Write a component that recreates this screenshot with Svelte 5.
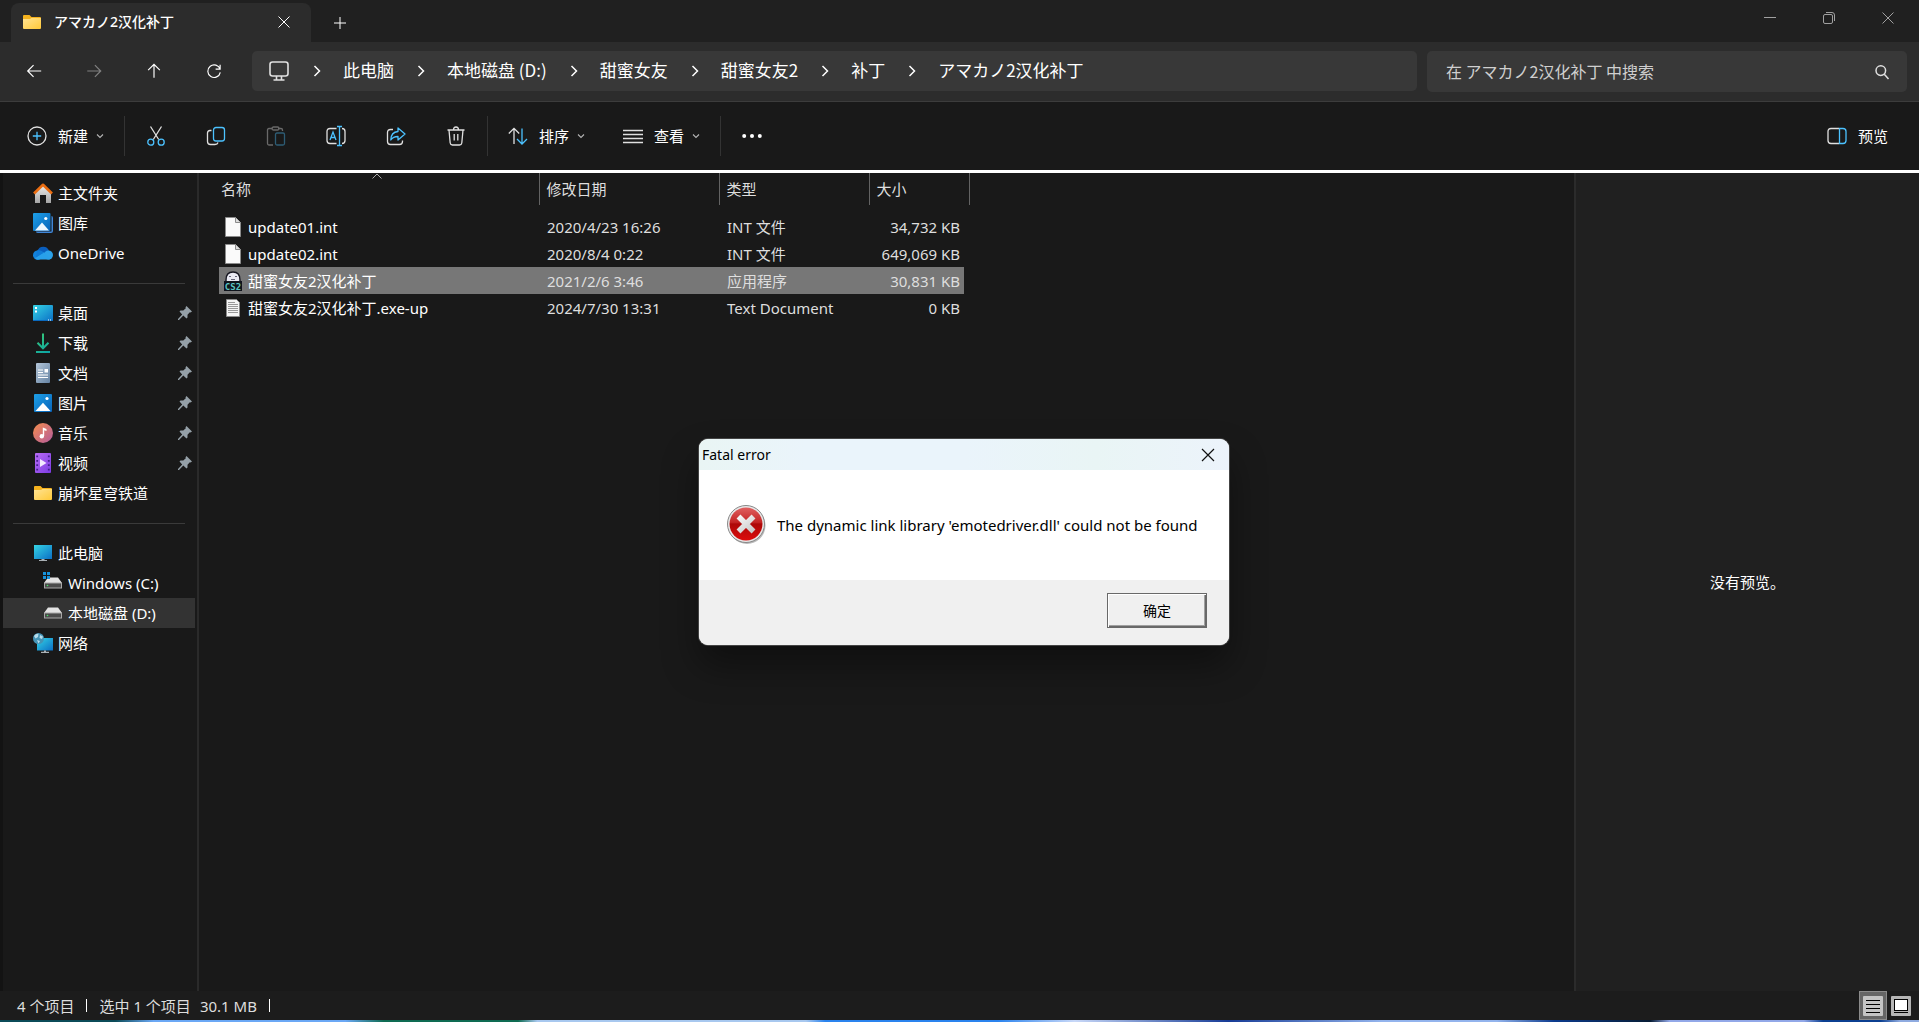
<script lang="ts">
	type Place = {
		icon: string;
		label: string;
		pinned?: boolean;
		nested?: boolean;
		current?: boolean;
	};

	type FileRow = {
		icon: string;
		name: string;
		date: string;
		type: string;
		size: string;
	};

	const folderName = 'アマカノ2汉化补丁';
	const crumbs = ['此电脑', '本地磁盘 (D:)', '甜蜜女友', '甜蜜女友2', '补丁', folderName];

	const groups: Place[][] = [
		[
			{ icon: 'home', label: '主文件夹' },
			{ icon: 'gallery', label: '图库' },
			{ icon: 'cloud', label: 'OneDrive' }
		],
		[
			{ icon: 'desktop', label: '桌面', pinned: true },
			{ icon: 'download', label: '下载', pinned: true },
			{ icon: 'document', label: '文档', pinned: true },
			{ icon: 'picture', label: '图片', pinned: true },
			{ icon: 'music', label: '音乐', pinned: true },
			{ icon: 'video', label: '视频', pinned: true },
			{ icon: 'folder', label: '崩坏星穹铁道' }
		],
		[
			{ icon: 'pc', label: '此电脑' },
			{ icon: 'drive-win', label: 'Windows (C:)', nested: true },
			{ icon: 'drive', label: '本地磁盘 (D:)', nested: true, current: true },
			{ icon: 'network', label: '网络' }
		]
	];

	const files: FileRow[] = [
		{ icon: 'blank', name: 'update01.int', date: '2020/4/23 16:26', type: 'INT 文件', size: '34,732 KB' },
		{ icon: 'blank', name: 'update02.int', date: '2020/8/4 0:22', type: 'INT 文件', size: '649,069 KB' },
		{ icon: 'exe', name: '甜蜜女友2汉化补丁', date: '2021/2/6 3:46', type: '应用程序', size: '30,831 KB' },
		{ icon: 'text', name: '甜蜜女友2汉化补丁.exe-up', date: '2024/7/30 13:31', type: 'Text Document', size: '0 KB' }
	];

	const tools = [
		{ icon: 'cut', label: '剪切' },
		{ icon: 'copy', label: '复制' },
		{ icon: 'paste', label: '粘贴', disabled: true },
		{ icon: 'rename', label: '重命名' },
		{ icon: 'share', label: '共享' },
		{ icon: 'trash', label: '删除' }
	];

	const navigation = [
		{ icon: 'back', label: '后退' },
		{ icon: 'forward', label: '前进', disabled: true },
		{ icon: 'up', label: '向上' },
		{ icon: 'refresh', label: '刷新' }
	];

	let selected = $state(2);
	let dialogOpen = $state(true);
	let query = $state('');

	const closeDialog = () => {
		dialogOpen = false;
	};
</script>

{#snippet chevron()}
	<svg class="chevron" viewBox="0 0 8 8" width="8" height="8" aria-hidden="true">
		<path d="M1 2.5 4 5.5 7 2.5" fill="none" stroke="#b5b5b5" stroke-width="1.1" />
	</svg>
{/snippet}

{#snippet glyph(name: string)}
	<svg class="glyph" viewBox="0 0 20 20" width="20" height="20" aria-hidden="true">
		{#if name === 'back'}
			<path d="M18 10H3M9.5 3.5 3 10 9.5 16.5" />
		{:else if name === 'forward'}
			<path d="M2.5 10H17.5M11 3.5 17.5 10 11 16.5" />
		{:else if name === 'up'}
			<path d="M10 17.5V3M3.5 9 10 2.5 16.5 9" />
		{:else if name === 'refresh'}
			<path d="M16.8 8A7 7 0 1 0 17 11.5M16.8 3V8H11.8" />
		{:else if name === 'monitor'}
			<rect x="1" y="1" width="18" height="14" rx="2.5" stroke-width="1.6" />
			<path d="M7.5 15V18.5M12.5 15V18.5M4.5 19H15.5" stroke-width="1.6" />
		{:else if name === 'new'}
			<circle cx="10" cy="10" r="9" />
			<path class="accent" d="M10 5.8V14.2M5.8 10H14.2" />
		{:else if name === 'cut'}
			<path d="M4.5 .5 12.7 13.5M15.5 .5 7.3 13.5" />
			<g class="accent"><circle cx="4.8" cy="16.2" r="3" /><circle cx="15.2" cy="16.2" r="3" /></g>
		{:else if name === 'copy'}
			<path d="M5.5 4.5H4Q1.5 4.5 1.5 7V15.5Q1.5 18.5 4.5 18.5H9Q11.5 18.5 12 16.5" />
			<rect class="accent" x="7.5" y="1.5" width="11" height="13.5" rx="2.5" />
		{:else if name === 'paste'}
			<path d="M6.5 2.5H3Q1.5 2.5 1.5 4V17.5Q1.5 19 3 19H7M12 2.5H15Q16.5 2.5 16.5 4V5" />
			<rect x="6" y="1" width="7" height="3" rx="1.5" />
			<rect class="accent" x="9.5" y="7" width="9" height="12" rx="1.5" />
		{:else if name === 'rename'}
			<path d="M10.5 2.5H4Q1 2.5 1 5.5V14.5Q1 17.5 4 17.5H10.5M16 2.5Q19 2.5 19 5.5V14.5Q19 17.5 16 17.5" />
			<path class="accent" d="M4 14 7 6 10 14M5 11.5H9M13.5 .5V19.5M11 .5H16M11 19.5H16" />
		{:else if name === 'share'}
			<path d="M7 3.5H4.5Q1.5 3.5 1.5 6.5V15.5Q1.5 18.5 4.5 18.5H13.5Q16.5 18.5 16.5 15.5V14.5" />
			<path class="accent" d="M12 2 19 8 12 14V10.5Q7 10.5 4.8 14Q5 6 12 5.5Z" stroke-linejoin="round" />
		{:else if name === 'trash'}
			<path d="M1.5 4H18.5M3 4 4.2 17Q4.5 19 6.5 19H13.5Q15.5 19 15.8 17L17 4M7.5 4Q7.5 1 10 1T12.5 4M8.2 8V14.5M11.8 8V14.5" />
		{:else if name === 'sort'}
			<path d="M6 18V2.5M.8 7.5 6 2.3 11.2 7.5" />
			<path class="accent" d="M14 2.5V17.5M9 13 14 18 19 13" />
		{:else if name === 'view'}
			<path d="M0 4.5H20M0 8.5H20M0 12.5H20M0 16.5H20" />
		{:else if name === 'more'}
			<g fill="#fff" stroke="none"><circle cx="2.2" cy="10" r="2" /><circle cx="10" cy="10" r="2" /><circle cx="17.8" cy="10" r="2" /></g>
		{:else if name === 'preview'}
			<path d="M12 2.5H4Q1 2.5 1 5.5V14.5Q1 17.5 4 17.5H12" />
			<path class="accent" d="M12.5 2.5H16Q19 2.5 19 5.5V14.5Q19 17.5 16 17.5H12.5Z" />
		{:else if name === 'search'}
			<circle cx="8.8" cy="8.6" r="4.8" stroke-width="1.5" />
			<path d="M12.3 12.3 16.5 17" stroke-width="1.5" />
		{/if}
	</svg>
{/snippet}

{#snippet picture(name: string)}
	<svg class="picture" viewBox="0 0 20 20" width="20" height="20" aria-hidden="true">
		{#if name === 'home'}
			<path d="M2 9 10 2 18 9V20H13V12H7V20H2Z" fill="url(#grey)" />
			<path d="M1 10.5 10 1.8 19 10.5" fill="none" stroke="#ea6d12" stroke-width="2.6" stroke-linejoin="round" />
		{:else if name === 'gallery'}
			<path d="M18.5 3Q20 3 20 5V18Q20 20 18 20H5Q3 20 3 18.5H18.5Z" fill="#3f86d8" />
			<rect width="17.5" height="18" rx="1" fill="url(#blue)" />
			<path d="M2 17.5 9 9.5 16 17.5Z" fill="#eef7ff" />
			<circle cx="12.8" cy="5.5" r="1.6" fill="#fff" />
		{:else if name === 'cloud'}
			<path d="M4.5 8A6 6 0 0 1 16 8L12 13Z" fill="#0a5ebd" />
			<circle cx="4.8" cy="12.2" r="4.8" fill="#1282dc" />
			<circle cx="15.5" cy="12" r="4.5" fill="#2ba1e9" />
			<path d="M2 15 11 9 17 16.5H4.5Q2.5 16.5 2 15Z" fill="#28a0ea" />
			<path d="M4 7.5Q7 6.5 11 9.5L3 14.5Z" fill="#0f7ad6" />
		{:else if name === 'desktop'}
			<rect y="2" width="20" height="16" rx="1" fill="url(#cyan)" />
			<path d="M0 17H20V18H0Z" fill="#0a69bd" />
			<path d="M2 4H4V6H2ZM2 7.5H4V9.5H2ZM15 16.5H16V17.5H15ZM17 16.5H18V17.5H17Z" fill="#fff" />
		{:else if name === 'download'}
			<path d="M10 .5V15M4.5 9.8 10 15.3 15.5 9.8M3 19H17" fill="none" stroke="url(#green)" stroke-width="2" />
		{:else if name === 'document'}
			<rect x="3" width="14" height="20" rx="1" fill="url(#steel)" />
			<path d="M5 7H10M5 9.5H10M5 12H15M5 14.5H15" stroke="#fff" stroke-width="1.2" />
			<path d="M11.5 6H15V9.5H11.5Z" fill="#fff" />
		{:else if name === 'picture'}
			<rect x="1" y="1" width="18" height="18" rx="1" fill="url(#blue)" />
			<path d="M2.5 18 10 9.8 17.5 18Z" fill="#fff" />
			<circle cx="14" cy="5.5" r="1.6" fill="#fff" />
		{:else if name === 'music'}
			<circle cx="10" cy="10" r="10" fill="url(#coral)" />
			<circle cx="8.8" cy="13.2" r="2.2" fill="#fff" />
			<path d="M9.8 13V4.5L13.5 6V8L11.2 7.2V13Z" fill="#fff" />
		{:else if name === 'video'}
			<rect x="2" width="16" height="20" rx="1" fill="url(#violet)" />
			<path d="M4.2 2.5V19M15.8 2.5V19" stroke="#43208d" stroke-width="1.8" stroke-dasharray="1.8 2.6" />
			<path d="M7 6 13.5 10 7 14Z" fill="#f3eaff" />
		{:else if name === 'folder'}
			<path d="M1 4Q1 3 2 3H7.5L9.5 5H18Q19 5 19 6V16H1Z" fill="#f5b21e" />
			<path d="M1 7H8L9.5 6H19V16Q19 17 18 17H2Q1 17 1 16Z" fill="url(#gold)" />
		{:else if name === 'pc'}
			<rect x="1" y="2" width="18" height="14" fill="url(#cyan)" />
			<path d="M8.5 16H11.5V17H14V18H6V17H8.5Z" fill="#a9b0b5" />
		{:else if name === 'drive' || name === 'drive-win'}
			<path d="M5 4.5H15L19 10H1Z" fill="#e4e4e4" />
			<rect x="1" y="9.5" width="18" height="6" fill="#a8a8a8" />
			<rect x="2" y="10.5" width="16" height="4" fill="#4b4b4b" />
			<circle cx="4.5" cy="12.5" r=".8" fill="#45e86a" />
			{#if name === 'drive-win'}
				<path d="M0 -1H7V6H0Z" fill="#191919" />
				<path d="M0 -1H3V2H0ZM4 -1H7V2H4ZM0 3H3V6H0ZM4 3H7V6H4Z" fill="#1793dc" />
			{/if}
		{:else if name === 'network'}
			<rect x="4" y="5" width="16" height="12.5" fill="url(#cyan)" />
			<path d="M11 17.5H13V18.8H16V20H8V18.8H11Z" fill="#a9b0b5" />
			<circle cx="5.5" cy="5.5" r="5.5" fill="#4593b5" />
			<path d="M1 3Q3 0 5.5 .8L5 4 2.5 5.5ZM7 2 10 3.5 9 6 6.5 5ZM4 7 7 8 5.5 10.5Z" fill="#b6dceb" />
		{:else if name === 'blank'}
			<path d="M2.5 .5H12.5L17.5 5.5V19.5H2.5Z" fill="#fafafa" stroke="#8b8b8b" />
			<path d="M12.5 .5V5.5H17.5" fill="#ddd" stroke="#8b8b8b" />
		{:else if name === 'text'}
			<path d="M3.5 1.5H13.5L16.5 4.5V18.5H3.5Z" fill="#f5f5f5" stroke="#8b8b8b" />
			<path d="M5 4.5H12M5 6.5H15M5 8.5H15M5 10.5H15M5 12.5H15M5 14.5H15" stroke="#999" />
		{:else if name === 'exe'}
			<path d="M3 9Q3 1 10 1T17 9V11H3Z" fill="#e9e9f2" stroke="#15151f" stroke-width="1.4" />
			<path d="M6 5.5H8M12 5.5H14M8 8.5H12" stroke="#666679" stroke-width="1.2" />
			<rect x="1" y="10" width="18" height="10" fill="#10141c" />
			<text x="10" y="18.5" text-anchor="middle">CS2</text>
		{/if}
	</svg>
{/snippet}

<svg class="defs" width="0" height="0" aria-hidden="true">
	<defs>
		<linearGradient id="grey" x2="0" y2="1"><stop stop-color="#eee" /><stop offset="1" stop-color="#a5a5a5" /></linearGradient>
		<linearGradient id="blue" x2="1" y2="1"><stop stop-color="#1da0e8" /><stop offset="1" stop-color="#0863b9" /></linearGradient>
		<linearGradient id="cyan" x2="1" y2="1"><stop stop-color="#35d4e4" /><stop offset="1" stop-color="#0b6fc6" /></linearGradient>
		<linearGradient id="green" gradientUnits="userSpaceOnUse" x1="4" y1="2" x2="16" y2="19"><stop stop-color="#37c978" /><stop offset="1" stop-color="#0da5a5" /></linearGradient>
		<linearGradient id="steel" x2="1" y2="1"><stop stop-color="#b4c6d8" /><stop offset="1" stop-color="#6583a3" /></linearGradient>
		<linearGradient id="coral" x2="1" y2="1"><stop stop-color="#f58d4c" /><stop offset="1" stop-color="#b35b9e" /></linearGradient>
		<linearGradient id="violet" x2="1" y2="1"><stop stop-color="#b96cf5" /><stop offset="1" stop-color="#7b3be2" /></linearGradient>
		<linearGradient id="gold" x2="1" y2="1"><stop stop-color="#ffe394" /><stop offset="1" stop-color="#ffc938" /></linearGradient>
		<linearGradient id="red" x2="0" y2="1"><stop stop-color="#e06060" /><stop offset=".45" stop-color="#c42424" /><stop offset=".5" stop-color="#ad0808" /><stop offset="1" stop-color="#dd0c0c" /></linearGradient>
		<linearGradient id="silver" gradientUnits="userSpaceOnUse" x1="12" y1="10" x2="26" y2="30"><stop stop-color="#fafafa" /><stop offset="1" stop-color="#c4c4c4" /></linearGradient>
	</defs>
</svg>

<div class="explorer">
	<header class="titlebar">
		<div class="tab">
			{@render picture('folder')}
			<span class="tab-title">{folderName}</span>
			<button type="button" class="tab-close" aria-label="关闭标签页">
				<svg viewBox="0 0 12 12" width="12" height="12"><path d="M.5 .5 11.5 11.5M11.5 .5 .5 11.5" /></svg>
			</button>
		</div>
		<button type="button" class="tab-add" aria-label="新建标签页">
			<svg viewBox="0 0 12 12" width="12" height="12"><path d="M6 0V12M0 6H12" /></svg>
		</button>
		<div class="window-controls">
			<button type="button" aria-label="最小化">
				<svg viewBox="0 0 12 12" width="12" height="12"><path d="M0 5.5H12" /></svg>
			</button>
			<button type="button" aria-label="还原">
				<svg viewBox="0 0 12 12" width="12" height="12">
					<rect x=".5" y="2.5" width="9" height="9" rx="1.5" />
					<path d="M3 .5H9Q11.5 .5 11.5 3V9" />
				</svg>
			</button>
			<button type="button" aria-label="关闭">
				<svg viewBox="0 0 12 12" width="12" height="12"><path d="M.5 .5 11.5 11.5M11.5 .5 .5 11.5" /></svg>
			</button>
		</div>
	</header>

	<div class="navbar">
		<div class="nav-buttons">
			{#each navigation as item (item.icon)}
				<button type="button" aria-label={item.label} disabled={item.disabled}>{@render glyph(item.icon)}</button>
			{/each}
		</div>
		<nav class="address" aria-label="地址栏">
			{@render glyph('monitor')}
			{#each crumbs as crumb}
				<svg class="crumb-arrow" viewBox="0 0 8 12" width="8" height="12" aria-hidden="true">
					<path d="M1.5 1 6.5 6 1.5 11" />
				</svg>
				<a href="#top">{crumb}</a>
			{/each}
		</nav>
		<label class="search">
			<input type="text" aria-label="搜索" placeholder="在 {folderName} 中搜索" bind:value={query} />
			{@render glyph('search')}
		</label>
	</div>

	<div class="toolbar">
		<button type="button" class="labelled">{@render glyph('new')}<span>新建</span>{@render chevron()}</button>
		<span class="rule"></span>
		{#each tools as tool (tool.icon)}
			<button type="button" class="tool" aria-label={tool.label} disabled={tool.disabled}>{@render glyph(tool.icon)}</button>
		{/each}
		<span class="rule"></span>
		<button type="button" class="labelled">{@render glyph('sort')}<span>排序</span>{@render chevron()}</button>
		<button type="button" class="labelled">{@render glyph('view')}<span>查看</span>{@render chevron()}</button>
		<span class="rule"></span>
		<button type="button" class="tool" aria-label="查看更多">{@render glyph('more')}</button>
		<button type="button" class="labelled preview-toggle">{@render glyph('preview')}<span>预览</span></button>
	</div>

	<div class="body">
		<aside class="sidebar">
			{#each groups as group}
				<ul>
					{#each group as place (place.label)}
						<li>
							<a href="#top" class:nested={place.nested} class:current={place.current}>
								{@render picture(place.icon)}
								<span>{place.label}</span>
								{#if place.pinned}
									<svg class="pin" viewBox="0 0 14 14" width="14" height="14" aria-hidden="true">
										<path d="M8.5 0 14 5.5 12.5 6.5 11.8 6.2 9.5 8.8 9.5 11.5 8.5 12.5 5.3 9.6 1 14 0 13.9 0 13 4.2 8.5 1.5 5.5 2.5 4.5 5.3 4.5 7.8 2.2 7.5 1.2Z" fill="#95a0a8" />
									</svg>
								{/if}
							</a>
						</li>
					{/each}
				</ul>
			{/each}
		</aside>

		<main class="files">
			<table>
				<colgroup>
					<col class="col-name" /><col class="col-date" /><col class="col-type" /><col class="col-size" /><col class="col-end" />
				</colgroup>
				<thead>
					<tr>
						<th class="sorted" aria-sort="ascending">
							名称
							<svg class="caret" viewBox="0 0 10 6" width="10" height="6" aria-hidden="true"><path d="M.5 5.5 5 1 9.5 5.5" /></svg>
						</th>
						<th>修改日期</th>
						<th>类型</th>
						<th colspan="2">大小</th>
					</tr>
				</thead>
				<tbody>
					{#each files as file, index (file.name)}
						<tr class:selected={selected === index} onclick={() => (selected = index)}>
							<td><span class="file-name">{@render picture(file.icon)}{file.name}</span></td>
							<td>{file.date}</td>
							<td>{file.type}</td>
							<td class="size">{file.size}</td>
						</tr>
					{/each}
				</tbody>
			</table>
		</main>

		<aside class="preview"><p>没有预览。</p></aside>
	</div>

	<footer class="status">
		<span>4 个项目</span>
		<span class="bar"></span>
		<span class="selection">选中 1 个项目</span>
		<span>30.1 MB</span>
		<span class="bar"></span>
		<div class="modes">
			<button type="button" class="active" aria-label="详细信息">
				<svg viewBox="0 0 20 20" width="20" height="20">
					<rect width="20" height="20" rx="1" fill="#c4c4c4" />
					<path d="M3 4.5H17M3 8.5H17M3 12.5H17M3 16.5H17" stroke="#000" />
				</svg>
			</button>
			<button type="button" aria-label="大缩略图">
				<svg viewBox="0 0 20 20" width="20" height="20">
					<rect width="20" height="20" rx="1" fill="#b5b5b5" />
					<rect x="3.5" y="3.5" width="13" height="11" fill="#fff" stroke="#000" />
					<path d="M3 16.5H17" stroke="#000" />
				</svg>
			</button>
		</div>
	</footer>
	<div class="wallpaper"></div>

	{#if dialogOpen}
		<div class="dialog" role="alertdialog" aria-labelledby="dialog-title" aria-describedby="dialog-message">
			<div class="dialog-title">
				<span id="dialog-title">Fatal error</span>
				<button type="button" aria-label="关闭对话框" onclick={closeDialog}>
					<svg viewBox="0 0 12 12" width="12" height="12"><path d="M0 0 12 12M12 0 0 12" /></svg>
				</button>
			</div>
			<div class="dialog-message">
				<svg viewBox="0 0 40 40" width="40" height="40" aria-hidden="true">
					<circle cx="21" cy="20.5" r="18.5" fill="#b9b9b9" />
					<circle cx="20" cy="19" r="18.5" fill="#e8e8e8" stroke="#888" />
					<circle cx="20" cy="19" r="16.5" fill="url(#red)" />
					<path d="M12.5 11.5 27.5 26.5M27.5 11.5 12.5 26.5" stroke="url(#silver)" stroke-width="5.5" />
				</svg>
				<p id="dialog-message">The dynamic link library 'emotedriver.dll' could not be found</p>
			</div>
			<div class="dialog-actions">
				<button type="button" onclick={closeDialog}>确定</button>
			</div>
		</div>
	{/if}
</div>

<style>
	:global(body) {
		margin: 0;
		background: #191919;
	}

	.explorer {
		position: relative;
		display: flex;
		flex-direction: column;
		min-height: 100vh;
		overflow: hidden;
		font-family: "Noto Sans", "Noto Sans CJK SC", sans-serif;
		font-size: 15px;
		line-height: 20px;
		color: #fff;
		background: #191919;
	}

	.defs {
		position: absolute;
	}

	button {
		display: inline-flex;
		align-items: center;
		justify-content: center;
		padding: 0;
		border: 0;
		font: inherit;
		color: inherit;
		background: none;
	}

	a {
		color: inherit;
		text-decoration: none;
	}

	svg {
		flex: none;
		overflow: visible;
	}

	.glyph {
		fill: none;
		stroke: #e0e0e0;
		stroke-width: 1.3;
	}

	.glyph .accent {
		stroke: #4cc2ff;
	}

	.picture text {
		font: bold 9px "DejaVu Sans Mono", monospace;
		fill: #5cc4c0;
	}

	.titlebar {
		display: flex;
		height: 42px;
		background: #202020;
	}

	.titlebar button svg {
		fill: none;
		stroke: #fff;
	}

	.tab {
		display: flex;
		align-items: center;
		box-sizing: border-box;
		width: 300px;
		margin: 3px 0 0 11px;
		padding: 0 21px 2px 11px;
		border-radius: 8px 8px 0 0;
		background: #2c2c2c;
	}

	.tab-title {
		flex: 1;
		margin-left: 12px;
		font-family: "Noto Sans", "Noto Sans CJK JP", "Noto Sans CJK SC", sans-serif;
		font-size: 14px;
		font-weight: 500;
	}

	.tab-add {
		width: 58px;
		padding-top: 3px;
	}

	.window-controls {
		display: flex;
		align-items: center;
		margin-left: auto;
		padding-right: 2px;
		height: 36px;
	}

	.window-controls button {
		width: 59px;
		height: 36px;
	}

	.titlebar .window-controls svg {
		stroke: #a0a0a0;
	}

	.navbar {
		display: flex;
		align-items: flex-start;
		box-sizing: border-box;
		height: 60px;
		padding: 9px 12px 0 4px;
		border-bottom: 1px solid #3c3c3c;
		background: #2c2c2c;
	}

	.nav-buttons {
		display: flex;
		width: 248px;
		height: 40px;
	}

	.nav-buttons button {
		width: 60px;
	}

	.nav-buttons .glyph {
		width: 18px;
		height: 18px;
		stroke: #fff;
	}

	button:disabled .glyph {
		opacity: 0.4;
	}

	.address {
		display: flex;
		flex: 1;
		align-items: center;
		height: 40px;
		padding-left: 17px;
		border-radius: 5px;
		font-family: "Noto Sans CJK SC", sans-serif;
		font-size: 17px;
		background: #383838;
	}

	.address .glyph {
		margin-right: 1px;
	}

	.address a {
		padding-bottom: 2px;
		white-space: nowrap;
	}

	.crumb-arrow {
		margin: 0 22px 0 23px;
		fill: none;
		stroke: #fff;
		stroke-width: 1.5;
	}

	.search {
		display: flex;
		align-items: center;
		box-sizing: border-box;
		width: 480px;
		height: 41px;
		margin-left: 10px;
		padding: 0 15px 0 19px;
		border-radius: 5px;
		background: #383838;
	}

	.search input {
		flex: 1;
		min-width: 0;
		padding: 0 0 2px;
		border: 0;
		outline: 0;
		font-family: "Noto Sans CJK SC", sans-serif;
		font-size: 16px;
		color: #fff;
		background: none;
	}

	.search input::placeholder {
		color: #cfcfcf;
		opacity: 1;
	}

	.toolbar {
		display: flex;
		align-items: center;
		box-sizing: border-box;
		height: 71px;
		padding: 0 15px 1px 8px;
		border-bottom: 3px solid #fff;
	}

	.labelled {
		gap: 11px;
		height: 40px;
		padding: 0 19px;
	}

	.labelled .chevron {
		margin-left: -3px;
	}

	.tool {
		width: 60px;
		height: 40px;
	}

	.rule {
		width: 1px;
		height: 40px;
		margin: 0 1px;
		background: #333;
	}

	.preview-toggle {
		margin-left: auto;
		padding: 0 16px;
	}

	.body {
		display: flex;
		flex: 1;
	}

	.sidebar {
		box-sizing: border-box;
		width: 199px;
		padding: 5px 2px 0 0;
		border-left: 3px solid #131313;
		border-right: 2px solid #2a2a2a;
	}

	.sidebar ul {
		margin: 0;
		padding: 0;
		list-style: none;
	}

	.sidebar ul + ul::before {
		content: '';
		display: block;
		height: 1px;
		margin: 15px 10px 14px;
		background: #3a3a3a;
	}

	.sidebar a {
		display: flex;
		align-items: center;
		gap: 5px;
		height: 30px;
		padding: 0 3px 0 30px;
	}

	.sidebar a.nested {
		padding-left: 40px;
	}

	.sidebar a.current {
		background: #333;
	}

	.sidebar span {
		white-space: nowrap;
	}

	.pin {
		margin-left: auto;
	}

	.files {
		flex: 1;
		min-width: 0;
		padding-left: 20px;
	}

	table {
		width: 750px;
		border-collapse: collapse;
		table-layout: fixed;
	}

	.col-name {
		width: 320px;
	}

	.col-date {
		width: 180px;
	}

	.col-type {
		width: 150px;
	}

	.col-size {
		width: 95px;
	}

	.col-end {
		width: 5px;
	}

	th {
		height: 32px;
		padding: 0 0 0 7px;
		border-right: 1px solid #636363;
		font-weight: 400;
		text-align: left;
		color: #dedede;
	}

	.sorted {
		position: relative;
		padding-left: 2px;
	}

	.caret {
		position: absolute;
		top: 0;
		left: 50%;
		margin-left: -7px;
		fill: none;
		stroke: #aaa;
	}

	tbody::before {
		content: '';
		display: block;
		height: 8px;
	}

	td {
		height: 27px;
		padding: 0 0 0 8px;
		white-space: nowrap;
		color: #dedede;
	}

	td:first-child {
		padding-left: 4px;
		color: #fff;
	}

	.size {
		padding: 0 4px 0 0;
		text-align: right;
	}

	.selected td {
		background: #777;
	}

	.file-name {
		display: flex;
		align-items: center;
		gap: 5px;
	}

	.preview {
		display: flex;
		align-items: center;
		justify-content: center;
		box-sizing: border-box;
		width: 345px;
		border-left: 2px solid #2b2b2b;
		background: #202020;
	}

	.preview p {
		margin: 0;
	}

	.status {
		display: flex;
		align-items: center;
		height: 29px;
		padding: 0 8px 0 17px;
		color: #dedede;
		background: #1c1c1c;
	}

	.bar {
		width: 1px;
		height: 13px;
		margin: 0 12px;
		background: #fff;
	}

	.selection {
		margin-right: 9px;
	}

	.modes {
		display: flex;
		align-items: center;
		gap: 4px;
		margin-left: auto;
	}

	.modes .active {
		box-sizing: border-box;
		width: 28px;
		height: 29px;
		border: 1px solid #8b8b8b;
		background: #666;
	}

	.wallpaper {
		height: 2px;
		background: linear-gradient(90deg, #0b4b58 0 6%, #6ba8f5 8% 18%, #0e6b52 20% 27%, #a8c8ef 28% 42%, #2a83ee 43% 52%, #c8d8f8 56%, #163b96 64%, #93b4ed 72% 78%, #0b3a8d 81%, #061c35 86%, #92a8e8 87% 94%, #0b3f91 95% 98%, #8fabe0 99%);
	}

	.dialog {
		position: absolute;
		top: 439px;
		left: 699px;
		width: 530px;
		overflow: hidden;
		border-radius: 9px;
		color: #000;
		background: #fff;
		box-shadow:
			0 0 0 1px #444,
			0 20px 36px rgba(0, 0, 0, 0.4);
	}

	.dialog-title {
		display: flex;
		align-items: center;
		justify-content: space-between;
		height: 31px;
		padding: 0 3px;
		font-size: 14px;
		background: linear-gradient(90deg, #e9f5f4, #eaf4fb 20% 50%, #e9f5f5 75%, #ecf3fb);
	}

	.dialog-title button {
		width: 36px;
		height: 30px;
	}

	.dialog-title svg {
		fill: none;
		stroke: #111;
		stroke-width: 1.2;
	}

	.dialog-message {
		display: flex;
		align-items: center;
		gap: 11px;
		height: 110px;
		padding-left: 27px;
	}

	.dialog-message p {
		margin: 0;
		font-size: 15px;
		white-space: nowrap;
	}

	.dialog-actions {
		display: flex;
		justify-content: flex-end;
		padding: 13px 22px 17px;
		background: #f0f0f0;
	}

	.dialog-actions button {
		box-sizing: border-box;
		width: 100px;
		height: 35px;
		border: 1px solid #696969;
		font-size: 14px;
		background: #f0f0f0;
		box-shadow:
			inset 1px 1px #fff,
			inset -1px -1px #696969,
			inset -2px -2px #a0a0a0;
	}
</style>
